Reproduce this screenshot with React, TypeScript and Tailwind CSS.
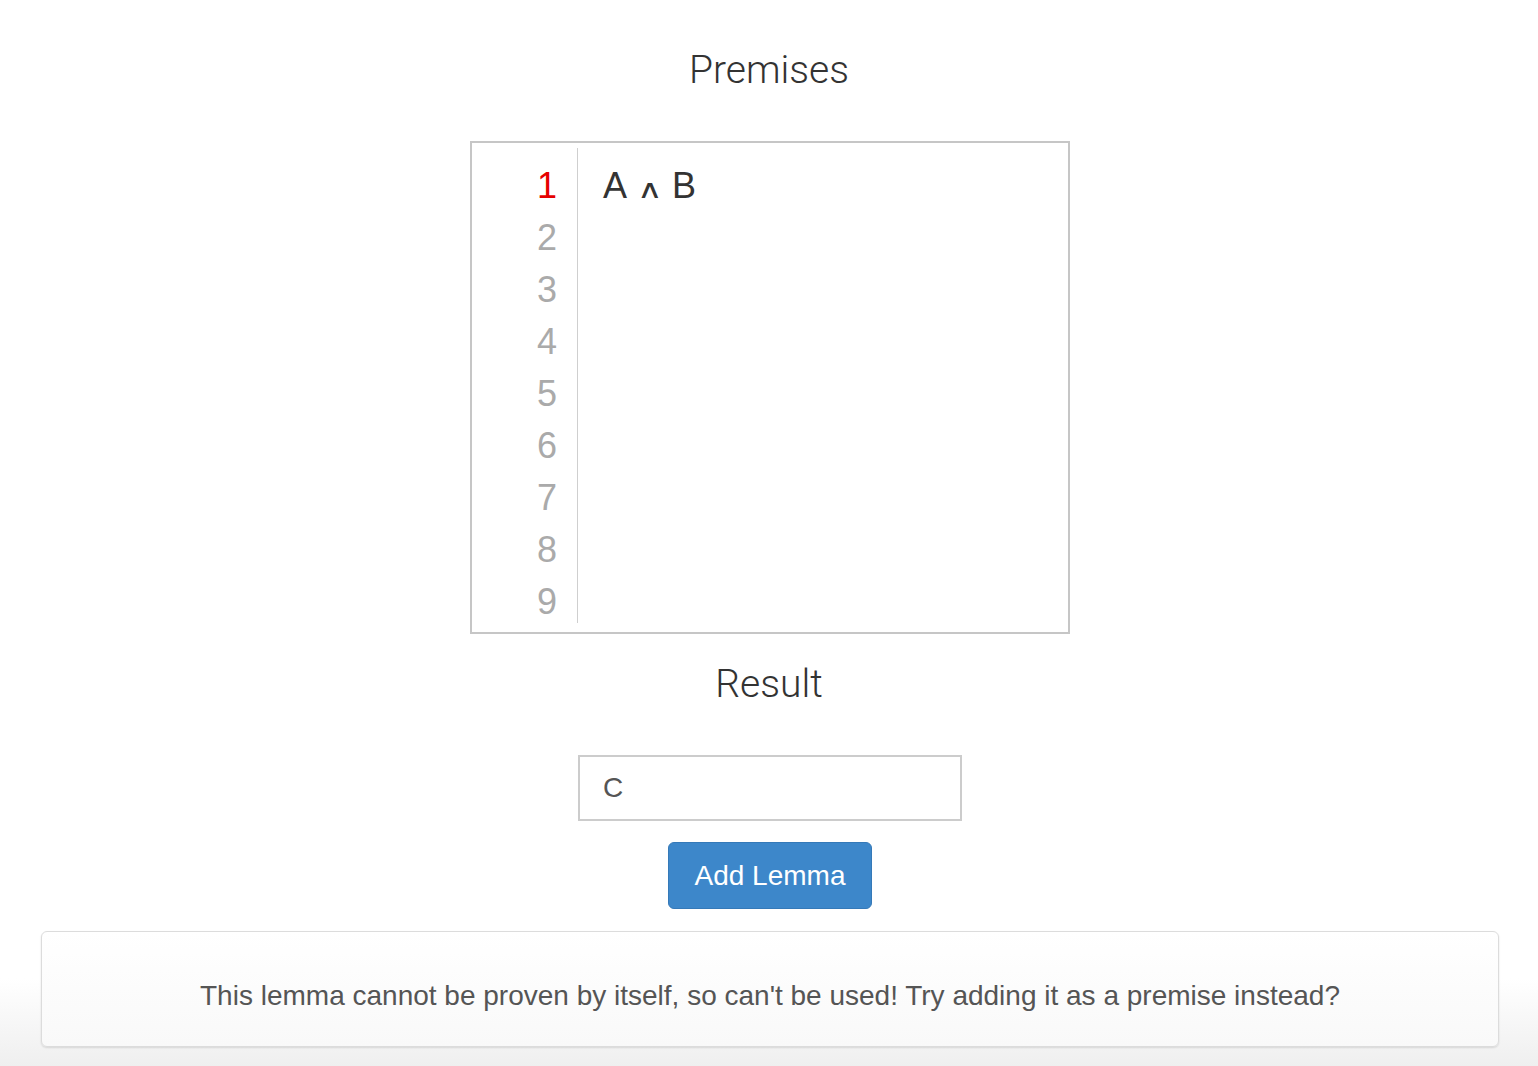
import React from "react";

const sans = { fontFamily: '"Liberation Sans", Arial, sans-serif' };

export default function App() {
  const lines = [1, 2, 3, 4, 5, 6, 7, 8, 9];
  return (
    <div className="w-[1538px] h-[1066px] bg-white flex flex-col items-center overflow-hidden" style={sans}>
      <h2 className="mt-[48px] text-[39px] leading-[44px] font-light text-[#333] font-['Roboto',sans-serif]">Premises</h2>

      <div className="mt-[49px] ml-[2px] w-[600px] h-[494px] border-2 border-[#c6c6c6] bg-white pt-[5px] flex">
        <div className="w-[106px] h-[475px] border-r border-[#cfcfcf] pt-[12px] pr-[20px] overflow-hidden text-right text-[36px] leading-[52px] font-['Liberation_Sans',Arial,sans-serif]">
          {lines.map((n) => (
            <div key={n} className={n === 1 ? "text-[#e60000]" : "text-[#aaaaaa]"}>
              {n}
            </div>
          ))}
        </div>
        <div className="flex-1 pl-[25px] pt-[12px] text-[36px] leading-[52px] text-[#333] font-['Liberation_Sans',Arial,sans-serif]">
          A
          <span className="inline-block mx-[13px] text-[26px] leading-[26px] scale-x-[1.35]">∧</span>
          B
        </div>
      </div>

      <h2 className="mt-[28px] text-[39px] leading-[44px] font-light text-[#333] font-['Roboto',sans-serif]">Result</h2>

      <div className="mt-[49px] ml-[2px] w-[384px] h-[66px] border-2 border-[#cccccc] flex items-center pl-[23px] text-[28px] text-[#555] font-['Liberation_Sans',Arial,sans-serif]">
        C
      </div>

      <button className="mt-[21px] ml-[2px] w-[204px] h-[67px] rounded-[6px] bg-[#3d87ca] border border-[#3579b8] text-white text-[28px] font-['Liberation_Sans',Arial,sans-serif]">
        Add Lemma
      </button>

      <div className="mt-[11px] w-full flex-1 pl-[41px] pr-[39px] pt-[11px] pb-[19px] bg-gradient-to-b from-white from-40% to-[#efefef]">
        <div className="h-[116px] rounded-[6px] border border-[#dcdcdc] bg-gradient-to-b from-white to-[#f9f9f9] shadow-[0_1px_2px_rgba(0,0,0,0.12)] pt-[48px] text-center text-[28px] leading-[32px] text-[#555] font-['Liberation_Sans',Arial,sans-serif]">
          This lemma cannot be proven by itself, so can't be used! Try adding it as a premise instead?
        </div>
      </div>
    </div>
  );
}
